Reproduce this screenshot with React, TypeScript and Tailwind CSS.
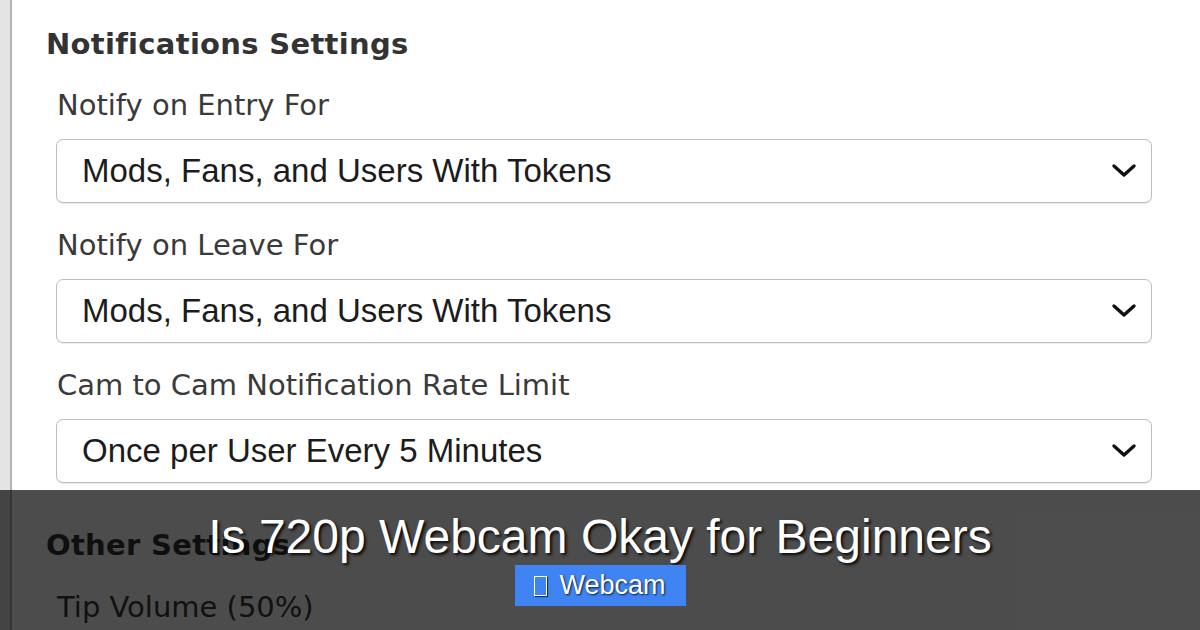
import React from 'react';

const fields = [
  { label: 'Notify on Entry For', value: 'Mods, Fans, and Users With Tokens' },
  { label: 'Notify on Leave For', value: 'Mods, Fans, and Users With Tokens' },
  { label: 'Cam to Cam Notification Rate Limit', value: 'Once per User Every 5 Minutes' },
];

const Chevron = () => (
  <svg width="26" height="16" viewBox="0 0 26 16" className="shrink-0">
    <polyline points="3,3 13,12 23,3" fill="none" stroke="#111" strokeWidth="3.4" strokeLinecap="round" strokeLinejoin="round" />
  </svg>
);

const SelectBox = ({ value }: { value: string }) => (
  <div className="h-[64px] flex items-center justify-between pl-[25px] pr-[14px] border border-[#bdbdbd] rounded-[7px] bg-white shadow-[0_1px_1px_rgba(0,0,0,0.08)]">
    <span className="text-[33px] text-[#1c1c1c] font-['Liberation_Sans',Arial,sans-serif]">{value}</span>
    <Chevron />
  </div>
);

const App = () => {
  return (
    <div className="relative w-[1200px] h-[630px] overflow-hidden bg-white flex">
      {/* sidebar edge */}
      <div className="w-[12px] shrink-0 bg-[#e4e4e4] border-r-2 border-[#b3b3b3]" />

      <div className="flex-1 pl-[34px] pr-[48px] pt-[24px] font-['DejaVu_Sans',Tahoma,sans-serif] text-[#3a3a3a]">
        <h2 className="h-[40px] leading-[40px] text-[29px] font-bold text-[#333] tracking-[0.3px]">Notifications Settings</h2>

        <div className="pl-[10px] mt-[21px] flex flex-col gap-[22px]">
          {fields.map((f) => (
            <div key={f.label}>
              <div className="h-[40px] leading-[40px] text-[29px] mb-[14px] ml-px">{f.label}</div>
              <SelectBox value={f.value} />
            </div>
          ))}
        </div>

        <h2 className="mt-[42px] h-[40px] leading-[40px] text-[29px] font-bold text-[#333] tracking-[0.3px]">Other Settings</h2>
        <div className="pl-[11px] mt-[22px] h-[40px] leading-[40px] text-[29px]">Tip Volume (50%)</div>
      </div>

      {/* caption overlay */}
      <div className="absolute left-0 right-0 bottom-0 h-[140px] bg-black/70 flex flex-col items-center pt-[19px] font-['Liberation_Sans',Arial,sans-serif]">
        <h1 className="h-[56px] leading-[56px] text-[48px] text-white [text-shadow:2px_2px_3px_rgba(0,0,0,0.9)]">
          Is 720p Webcam Okay for Beginners
        </h1>
        <div className="h-[41px] w-[171px] bg-[#3f84f2] flex items-center justify-center gap-[12px] text-white text-[27px] [text-shadow:1px_1px_2px_rgba(0,0,0,0.8)]">
          <span className="inline-block w-[13px] h-[20px] border-[1.5px] border-white shadow-[1px_1px_1px_rgba(0,0,0,0.6)]" />
          <span>Webcam</span>
        </div>
      </div>
    </div>
  );
};

export default App;
